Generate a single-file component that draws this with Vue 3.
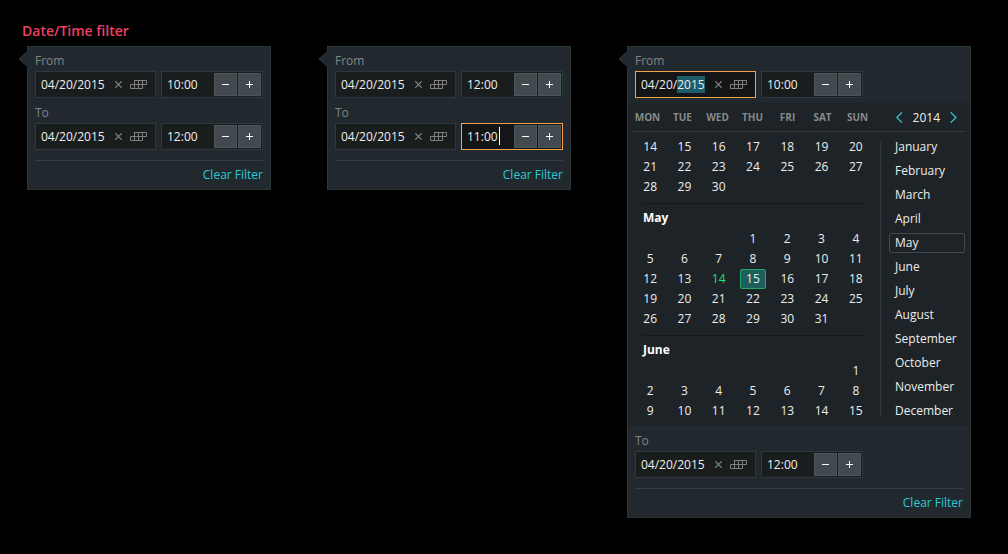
<script setup>
import { onMounted } from 'vue'

const filters = [
  {
    id: 'a',
    fields: [
      { key: 'from', label: 'From', date: '04/20/2015', time: '10:00' },
      { key: 'to', label: 'To', date: '04/20/2015', time: '12:00' },
    ],
  },
  {
    id: 'b',
    fields: [
      { key: 'from', label: 'From', date: '04/20/2015', time: '12:00' },
      { key: 'to', label: 'To', date: '04/20/2015', time: '11:00', editing: 'time' },
    ],
  },
  {
    id: 'c',
    wide: true,
    fields: [
      { key: 'from', label: 'From', date: '04/20/2015', time: '10:00', editing: 'date', calendar: true },
      { key: 'to', label: 'To', date: '04/20/2015', time: '12:00' },
    ],
  },
]

const weekdays = ['MON', 'TUE', 'WED', 'THU', 'FRI', 'SAT', 'SUN']
const monthNames = [
  'January', 'February', 'March', 'April', 'May', 'June',
  'July', 'August', 'September', 'October', 'November', 'December',
]

// offset: empty cells before the first day shown
function weeks(offset, first, last) {
  const cells = Array(offset).fill(null)
  for (let d = first; d <= last; d++) cells.push(d)
  while (cells.length % 7) cells.push(null)
  const rows = []
  for (let i = 0; i < cells.length; i += 7) rows.push(cells.slice(i, i + 7))
  return rows
}

const months = [
  { name: 'April', partial: true, rows: weeks(0, 14, 30) },
  { name: 'May', rows: weeks(3, 1, 31), today: 14, selected: 15 },
  { name: 'June', rows: weeks(6, 1, 15) },
]

onMounted(() => {
  const input = document.getElementById('c-from-date')
  input.focus()
  input.setSelectionRange(6, 10)
})
</script>

<template>
  <main class="page">
    <h1 class="title">Date/Time filter</h1>
    <div class="filters">
      <form
        v-for="f in filters"
        :key="f.id"
        class="panel"
        :class="{ wide: f.wide }"
        @submit.prevent
      >
        <svg class="pointer" width="10" height="16" viewBox="0 0 10 16" aria-hidden="true">
          <path d="M10 0 L9 0.5 L0.7 8 L9 15.5 L10 16Z" fill="#21292f" />
          <path d="M9.5 0.5 L1 8 L9.5 15.5" fill="none" stroke="#2a3639" />
        </svg>
        <template v-for="field in f.fields" :key="field.key">
          <div class="field">
            <label class="label" :for="`${f.id}-${field.key}-date`">{{ field.label }}</label>
            <div class="row">
              <div class="box date" :class="{ active: field.editing === 'date' }">
                <input :id="`${f.id}-${field.key}-date`" type="text" :value="field.date" />
                <button type="button" class="icon" aria-label="Clear date">
                  <svg width="7" height="7" viewBox="0 0 7 7">
                    <path d="M0.3 0.3 L6.7 6.7 M6.7 0.3 L0.3 6.7" stroke="#858788" stroke-width="1.2" fill="none" />
                  </svg>
                </button>
                <button type="button" class="icon grid" aria-label="Open calendar">
                  <svg width="17" height="9" viewBox="0 0 17 9">
                    <path
                      d="M4.5 0.5 H16.5 V4.5 H0.5 V8.5 H12.5 V0.5 M4.5 0.5 V8.5 M8.5 0.5 V8.5"
                      stroke="#808080"
                      fill="none"
                      stroke-linecap="square"
                    />
                  </svg>
                </button>
              </div>
              <div class="box time" :class="{ active: field.editing === 'time' }">
                <input type="text" :aria-label="`${field.label} time`" :value="field.time" />
                <span v-if="field.editing === 'time'" class="caret"></span>
                <button type="button" class="step" aria-label="Earlier">
                  <svg width="7" height="7" viewBox="0 0 7 7"><path d="M0 3.5 H7" stroke="#fff" /></svg>
                </button>
                <button type="button" class="step" aria-label="Later">
                  <svg width="7" height="7" viewBox="0 0 7 7"><path d="M0 3.5 H7 M3.5 0 V7" stroke="#fff" /></svg>
                </button>
              </div>
            </div>
          </div>

          <section v-if="field.calendar" class="calendar" aria-label="Calendar">
            <header class="cal-head">
              <div class="weekdays">
                <span v-for="w in weekdays" :key="w">{{ w }}</span>
              </div>
              <div class="year">
                <button type="button" aria-label="Previous year">
                  <svg width="7" height="11" viewBox="0 0 7 11">
                    <path d="M6 0.3 L0.8 5.5 L6 10.7" stroke="#2ccbd4" fill="none" stroke-width="1.2" />
                  </svg>
                </button>
                <span>2014</span>
                <button type="button" aria-label="Next year">
                  <svg width="7" height="11" viewBox="0 0 7 11">
                    <path d="M0.7 0.3 L6 5.5 L0.7 10.7" stroke="#2ccbd4" fill="none" stroke-width="1.2" />
                  </svg>
                </button>
              </div>
            </header>
            <div class="cal-body">
              <div class="days">
                <div v-for="m in months" :key="m.name" class="month">
                  <h2 v-if="!m.partial">{{ m.name }}</h2>
                  <table :aria-label="m.name">
                    <tbody>
                      <tr v-for="(week, i) in m.rows" :key="i">
                        <td v-for="(d, j) in week" :key="j">
                          <button
                            v-if="d"
                            type="button"
                            class="day"
                            :class="{ today: d === m.today, selected: d === m.selected }"
                          >{{ d }}</button>
                        </td>
                      </tr>
                    </tbody>
                  </table>
                </div>
              </div>
              <div class="month-list">
                <button
                  v-for="name in monthNames"
                  :key="name"
                  type="button"
                  :class="{ current: name === 'May' }"
                >{{ name }}</button>
              </div>
            </div>
          </section>
        </template>
        <footer class="foot"><a href="#">Clear Filter</a></footer>
      </form>
    </div>
  </main>
</template>

<style>
html,
body {
  margin: 0;
  background: #000;
}
</style>

<style scoped>
.page,
.page button,
.page input {
  font-family: 'Open Sans', 'Noto Sans', sans-serif;
  font-size: 12px;
}
.page {
  padding: 22px 22px 36px;
  color: #eceeee;
}
button {
  margin: 0;
  padding: 0;
  border: 0;
  background: none;
  color: inherit;
  cursor: pointer;
}
svg {
  display: block;
}
.title {
  margin: 0 0 6px;
  font-size: 14px;
  line-height: 18px;
  font-weight: 600;
  color: #ec3f62;
}
.filters {
  display: flex;
  align-items: flex-start;
  gap: 56px;
  padding-left: 5px;
}
.panel {
  position: relative;
  box-sizing: border-box;
  flex: 0 0 244px;
  background: #21292f;
  border: 1px solid #2a3639;
}
.panel.wide {
  flex-basis: 344px;
}
.pointer {
  position: absolute;
  left: -10px;
  top: 4px;
}
.field {
  padding: 6px 7px 0;
}
.field + .field,
.calendar + .field {
  padding-top: 7px;
}
.label {
  display: block;
  width: max-content;
  margin-bottom: 2px;
  line-height: 16px;
  color: #848484;
}
.row {
  display: flex;
  gap: 5px;
}
.box {
  position: relative;
  box-sizing: border-box;
  height: 27px;
  display: flex;
  align-items: center;
  background: #1a1d1e;
  border: 1px solid #2c393d;
}
.box.active {
  background: #141517;
  border-color: #f6a24c;
}
.box input {
  flex: 1;
  min-width: 0;
  height: 25px;
  box-sizing: border-box;
  padding: 0 0 0 5px;
  border: 0;
  outline: 0;
  background: none;
  color: #eceeee;
}
.box input::selection {
  background: #1f5c6a;
  color: #eceeee;
}
.date {
  width: 121px;
  padding-right: 8px;
}
.grid {
  margin-left: 8px;
}
.time {
  width: 102px;
  padding-right: 1px;
  gap: 1px;
}
.caret {
  position: absolute;
  left: 37px;
  top: 3px;
  width: 1px;
  height: 18px;
  background: #fff;
}
.step {
  box-sizing: border-box;
  width: 23px;
  height: 23px;
  display: grid;
  place-items: center;
  background: #42494f;
  border: 1px solid #4d5558;
}
.foot {
  margin: 10px 7px 0;
  padding: 6px 0;
  border-top: 1px solid #363e42;
  line-height: 16px;
  text-align: right;
}
.foot a {
  color: #2ccbd4;
  text-decoration: none;
}
.calendar {
  margin-top: 5px;
  background: #1d2326;
}
.cal-head {
  display: flex;
  align-items: center;
  justify-content: space-between;
  height: 28px;
  margin: 0 4px;
  border-bottom: 1px solid #30383b;
}
.weekdays {
  display: grid;
  grid-template-columns: repeat(7, 35px);
  margin-left: -2px;
  font-size: 10px;
  font-weight: 700;
  color: #868a8b;
  text-align: center;
}
.year {
  display: flex;
  align-items: center;
  gap: 10px;
  margin-right: 9px;
}
.cal-body {
  display: flex;
  padding: 5px;
}
.days {
  flex: 1;
  padding-right: 7px;
}
.month + .month {
  margin-top: 6px;
}
.month h2 {
  height: 21px;
  margin: 0 9px 0 10px;
  padding-top: 4px;
  border-top: 1px solid #14191b;
  font-size: 12px;
  line-height: 19px;
  font-weight: 700;
  color: #fff;
}
.month table {
  width: 100%;
  table-layout: fixed;
  border-collapse: collapse;
}
.month td {
  height: 20px;
  padding: 0;
}
.day {
  display: block;
  box-sizing: border-box;
  width: 26px;
  height: 20px;
  margin: 0 auto;
  line-height: 18px;
  border: 1px solid transparent;
}
.day.today {
  color: #1fe07e;
}
.day.selected {
  background: #1d5f5c;
  border-color: #22a66c;
  border-radius: 2px;
}
.month-list {
  display: flex;
  flex-direction: column;
  gap: 4px;
  width: 76px;
  padding-left: 9px;
  background: linear-gradient(#30383b, #30383b) 0 5px / 1px 274px no-repeat;
}
.month-list button {
  height: 20px;
  padding: 0 5px;
  border: 1px solid transparent;
  border-radius: 2px;
  line-height: 18px;
  text-align: left;
}
.month-list .current {
  border-color: #42494c;
}
</style>
